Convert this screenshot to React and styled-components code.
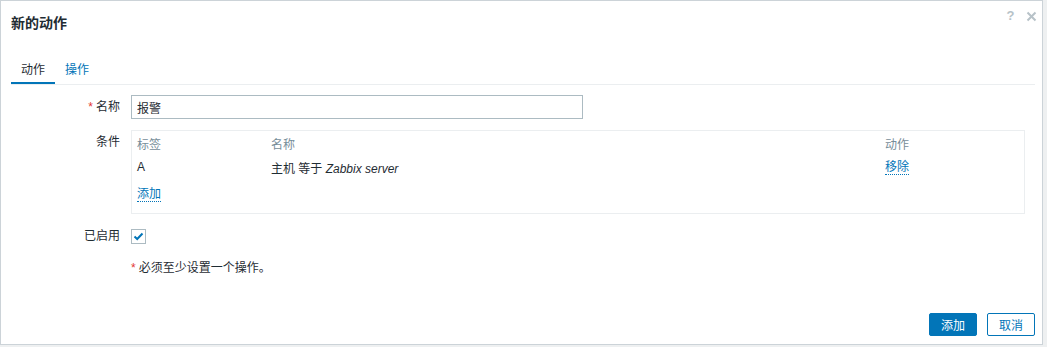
import React from "react";
import styled, { createGlobalStyle } from "styled-components";

const Global = createGlobalStyle`
  html, body { margin: 0; padding: 0; background: #eef0f1; }
  body { font-family: "Liberation Sans", Arial, "Noto Sans CJK SC", sans-serif; font-size: 12px; color: #1f2c33; }
  * { box-sizing: border-box; }
`;

const Dialog = styled.div`
  width: 1043px;
  height: 345px;
  background: #fff;
  border: 1px solid #ccd3d8;
  display: flex;
  flex-direction: column;
`;

const Header = styled.div`
  height: 44px;
  display: flex;
  align-items: flex-start;
  padding: 14px 5px 0 10px;
`;

const Title = styled.h4`
  margin: 0;
  font-size: 14px;
  line-height: 16px;
  font-weight: bold;
  color: #1f2c33;
`;

const HeaderIcons = styled.div`
  margin-left: auto;
  display: flex;
  align-items: center;
  gap: 10px;
  margin-top: -7px;
`;

const HelpIcon = styled.span`
  width: 11px;
  text-align: center;
  font-size: 13px;
  font-weight: bold;
  color: #b7c2c8;
  line-height: 16px;
`;

const CloseIcon = styled.svg`
  width: 11px;
  height: 11px;
  display: block;
`;

const Body = styled.div`
  flex: 1;
  padding: 0 7px 0 10px;
`;

const Tabs = styled.ul`
  list-style: none;
  margin: 0;
  padding: 0;
  display: flex;
  border-bottom: 1px solid #ebeef0;
`;

const Tab = styled.li`
  padding: 18px 10px 5px;
  line-height: 14px;
  border-bottom: 2px solid ${(p) => (p.$active ? "#0275b8" : "transparent")};
  color: ${(p) => (p.$active ? "#1f2c33" : "#0275b8")};
`;

const Form = styled.div`
  margin-top: 10px;
  display: grid;
  grid-template-columns: 109px 1fr;
  column-gap: 11px;
  align-items: start;
`;

const Label = styled.div`
  text-align: right;
  line-height: ${(p) => p.$lh || 24}px;
  margin-top: ${(p) => p.$mt || 0}px;
  white-space: nowrap;
`;

const Field = styled.div`
  margin-top: ${(p) => p.$mt || 0}px;
  min-height: 24px;
  display: flex;
  align-items: center;
`;

const Asterisk = styled.span`
  color: #e33734;
  margin-right: 3px;
`;

const TextInput = styled.input`
  width: 452px;
  height: 24px;
  border: 1px solid #acbbc2;
  padding: 0 5px;
  font: inherit;
  color: #1f2c33;
  outline: none;
`;

const CondBox = styled.div`
  width: 894px;
  border: 1px solid #ebeef0;
  padding: 0 5px 7px;
`;

const CondRow = styled.div`
  display: grid;
  grid-template-columns: 134px 614px 1fr;
  height: 24px;
  align-items: center;
  color: ${(p) => (p.$head ? "#768d99" : "#1f2c33")};
`;

const AddRow = styled.div`
  padding-top: 3px;
  height: 27px;
  display: flex;
  align-items: center;
`;

const Link = styled.a`
  color: #0275b8;
  text-decoration: none;
  border-bottom: 1px dotted #0275b8;
  line-height: 14px;
  cursor: pointer;
`;

const Italic = styled.em`
  font-style: italic;
`;

const Checkbox = styled.span`
  width: 15px;
  height: 15px;
  border: 1px solid #acbbc2;
  background: #fff;
  display: flex;
  align-items: center;
  justify-content: center;
`;

const Note = styled.div`
  grid-column: 2;
  margin-top: 8px;
  line-height: 24px;
`;

const Footer = styled.div`
  display: flex;
  justify-content: flex-end;
  gap: 10px;
  padding: 0 7px 8px 0;
`;

const Button = styled.button`
  width: 48px;
  height: 23px;
  font: inherit;
  border-radius: 2px;
  border: 1px solid #0275b8;
  background: ${(p) => (p.$primary ? "#0275b8" : "#fff")};
  color: ${(p) => (p.$primary ? "#fff" : "#0275b8")};
  padding: 0;
  cursor: pointer;
`;

export default function App() {
  return (
    <>
      <Global />
      <Dialog>
        <Header>
          <Title>新的动作</Title>
          <HeaderIcons>
            <HelpIcon>?</HelpIcon>
            <CloseIcon viewBox="0 0 11 11">
              <path d="M1.5 1.5 L9.5 9.5 M9.5 1.5 L1.5 9.5" stroke="#b7c2c8" strokeWidth="2" />
            </CloseIcon>
          </HeaderIcons>
        </Header>
        <Body>
          <Tabs>
            <Tab $active>动作</Tab>
            <Tab>操作</Tab>
          </Tabs>
          <Form>
            <Label>
              <Asterisk>*</Asterisk>名称
            </Label>
            <Field>
              <TextInput defaultValue="报警" />
            </Field>

            <Label $mt={11}>条件</Label>
            <Field $mt={11}>
              <CondBox>
                <CondRow $head>
                  <span>标签</span>
                  <span>名称</span>
                  <span>动作</span>
                </CondRow>
                <CondRow>
                  <span>A</span>
                  <span>
                    主机 等于 <Italic>Zabbix server</Italic>
                  </span>
                  <span>
                    <Link>移除</Link>
                  </span>
                </CondRow>
                <AddRow>
                  <Link>添加</Link>
                </AddRow>
              </CondBox>
            </Field>

            <Label $mt={10}>已启用</Label>
            <Field $mt={10}>
              <Checkbox>
                <svg width="11" height="9" viewBox="0 0 11 9">
                  <path d="M1.5 4.5 L4.2 7 L9.5 1.5" fill="none" stroke="#0275b8" strokeWidth="2" />
                </svg>
              </Checkbox>
            </Field>

            <Note>
              <Asterisk>*</Asterisk>必须至少设置一个操作。
            </Note>
          </Form>
        </Body>
        <Footer>
          <Button $primary>添加</Button>
          <Button>取消</Button>
        </Footer>
      </Dialog>
    </>
  );
}
